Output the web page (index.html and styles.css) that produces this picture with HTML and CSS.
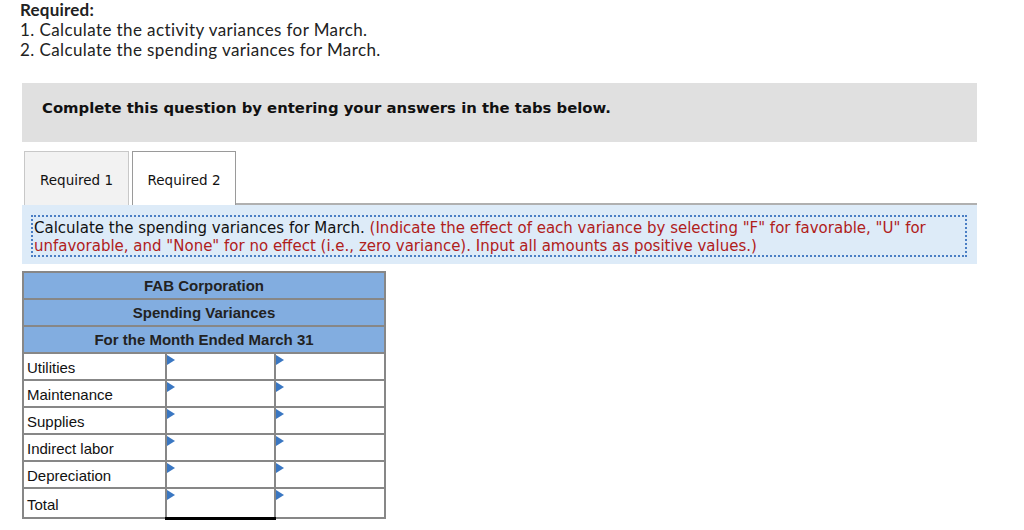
FILE: index.html
```html
<!DOCTYPE html>
<html>
<head>
<meta charset="utf-8">
<link rel="stylesheet" href="styles.css">
</head>
<body>
<div class="page">
  <div class="required">
    <div class="req-title">Required:</div>
    <div class="req-line">1. Calculate the activity variances for March.</div>
    <div class="req-line">2. Calculate the spending variances for March.</div>
  </div>
  <div class="banner">Complete this question by entering your answers in the tabs below.</div>
  <div class="tabs">
    <div class="tab">Required 1</div>
    <div class="tab tab-active">Required 2</div>
    <div class="tab-fill"></div>
  </div>
  <div class="instr">
    <div class="instr-inner">Calculate the spending variances for March. <span class="red">(Indicate the effect of each variance by selecting "F" for favorable, "U" for unfavorable, and "None" for no effect (i.e., zero variance). Input all amounts as positive values.)</span></div>
  </div>
  <table class="grid">
    <tr class="head"><td colspan="3">FAB Corporation</td></tr>
    <tr class="head"><td colspan="3">Spending Variances</td></tr>
    <tr class="head"><td colspan="3">For the Month Ended March 31</td></tr>
    <tr><td class="label">Utilities</td><td class="in"><span class="tri"></span></td><td class="in"><span class="tri"></span></td></tr>
    <tr><td class="label">Maintenance</td><td class="in"><span class="tri"></span></td><td class="in"><span class="tri"></span></td></tr>
    <tr><td class="label">Supplies</td><td class="in"><span class="tri"></span></td><td class="in"><span class="tri"></span></td></tr>
    <tr><td class="label">Indirect labor</td><td class="in"><span class="tri"></span></td><td class="in"><span class="tri"></span></td></tr>
    <tr><td class="label">Depreciation</td><td class="in"><span class="tri"></span></td><td class="in"><span class="tri"></span></td></tr>
    <tr class="total"><td class="label">Total</td><td class="in tot"><span class="tri"></span></td><td class="in"><span class="tri"></span></td></tr>
  </table>
</div>
</body>
</html>
```

FILE: styles.css
```css
html, body {
  margin: 0;
  padding: 0;
  background: #fff;
}
.page {
  width: 1024px;
  height: 530px;
  overflow: hidden;
  position: relative;
}
.required {
  padding-left: 20px;
  font-family: "Lato", "Liberation Sans", sans-serif;
  font-size: 17px;
  letter-spacing: 0.4px;
  color: #222;
  line-height: 20px;
}
.req-title {
  font-weight: bold;
  letter-spacing: 0.2px;
}
.banner {
  margin: 23px 47px 0 22px;
  height: 59px;
  box-sizing: border-box;
  padding: 16px 0 0 20px;
  background: #e0e0e0;
  font-family: "DejaVu Sans", Verdana, sans-serif;
  font-weight: bold;
  font-size: 14.85px;
  line-height: 18px;
  color: #111;
}
.tabs {
  display: flex;
  margin: 9px 47px 0 22px;
  height: 54px;
  align-items: stretch;
}
.tab {
  margin-left: 2px;
  width: 105px;
  box-sizing: border-box;
  border: 1px solid #c8c8c8;
  border-bottom: none;
  background: #f2f2f2;
  font-family: "DejaVu Sans", Verdana, sans-serif;
  font-size: 13.5px;
  display: flex;
  align-items: center;
  justify-content: center;
  padding-top: 3px;
  color: #111;
}
.tab-active {
  margin-left: 3px;
  width: 104px;
  background: #fff;
  border: 1px solid #9a9a9a;
  border-bottom: none;
}
.tab-fill {
  flex: 1;
  border-bottom: 2px solid #b0b0b0;
}
.instr {
  margin: 0 47px 0 22px;
  background: #ddebf8;
  height: 59px;
  box-sizing: border-box;
  padding: 10px 10px 0 9px;
}
.instr-inner {
  border: 2px dotted #4a7ec4;
  padding: 2px 0 0 1px;
  font-family: "DejaVu Sans", Verdana, sans-serif;
  font-size: 15px;
  line-height: 18px;
  color: #111;
}
.red {
  color: #b0201b;
}
.grid {
  margin: 7px 0 0 22px;
  border-collapse: collapse;
  width: 364px;
  border: 2px solid #878787;
  font-family: "Liberation Sans", Arial, sans-serif;
  font-size: 15px;
  color: #111;
}
.grid td {
  border: 2px solid #878787;
  padding: 0;
  height: 25px;
}
.grid tr.head td {
  background: #82ade0;
  text-align: center;
  font-weight: bold;
  color: #222;
}
.grid td.label {
  width: 138px;
  padding-left: 3px;
  padding-top: 2px;
  height: 23px;
}
.grid td.in {
  width: 108px;
  position: relative;
  background: #fff;
}
.grid tr.total td {
  height: 26px;
}
.grid td.tot {
  border-top: 2px solid #222;
  border-bottom: 3px solid #000;
}
.tri {
  position: absolute;
  left: 0;
  top: 1px;
  width: 0;
  height: 0;
  border-top: 5px solid transparent;
  border-bottom: 5px solid transparent;
  border-left: 8px solid #3a77c2;
}
```
